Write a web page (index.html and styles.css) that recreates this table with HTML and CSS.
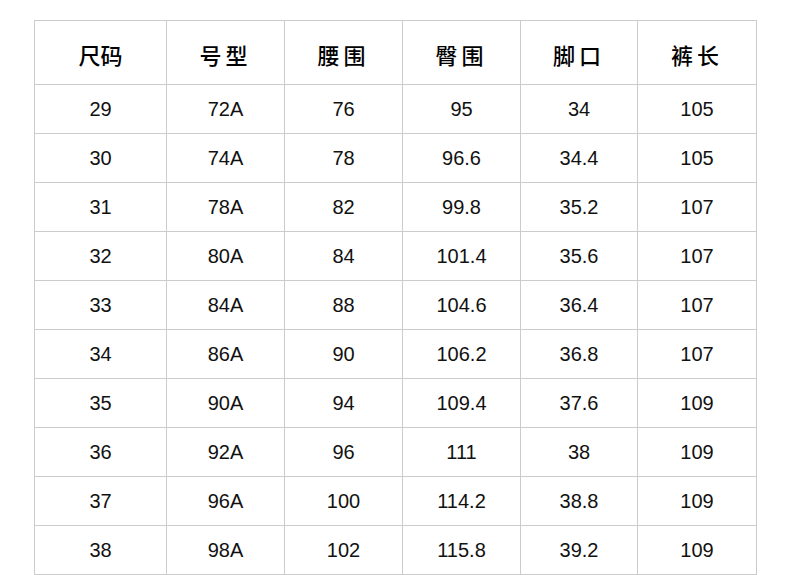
FILE: index.html
```html
<!DOCTYPE html>
<html lang="zh">
<head>
<meta charset="utf-8">
<title>尺码表</title>
<link rel="stylesheet" href="styles.css">
</head>
<body>
<table class="size-table">
  <colgroup>
    <col class="c1"><col class="c2"><col class="c3"><col class="c4"><col class="c5"><col class="c6">
  </colgroup>
  <thead>
    <tr class="head-row">
      <th class="first">尺码</th><th>号型</th><th>腰围</th><th>臀围</th><th>脚口</th><th>裤长</th>
    </tr>
  </thead>
  <tbody>
    <tr><td>29</td><td>72A</td><td>76</td><td>95</td><td>34</td><td>105</td></tr>
    <tr><td>30</td><td>74A</td><td>78</td><td>96.6</td><td>34.4</td><td>105</td></tr>
    <tr><td>31</td><td>78A</td><td>82</td><td>99.8</td><td>35.2</td><td>107</td></tr>
    <tr><td>32</td><td>80A</td><td>84</td><td>101.4</td><td>35.6</td><td>107</td></tr>
    <tr><td>33</td><td>84A</td><td>88</td><td>104.6</td><td>36.4</td><td>107</td></tr>
    <tr><td>34</td><td>86A</td><td>90</td><td>106.2</td><td>36.8</td><td>107</td></tr>
    <tr><td>35</td><td>90A</td><td>94</td><td>109.4</td><td>37.6</td><td>109</td></tr>
    <tr><td>36</td><td>92A</td><td>96</td><td>111</td><td>38</td><td>109</td></tr>
    <tr><td>37</td><td>96A</td><td>100</td><td>114.2</td><td>38.8</td><td>109</td></tr>
    <tr><td>38</td><td>98A</td><td>102</td><td>115.8</td><td>39.2</td><td>109</td></tr>
  </tbody>
</table>
</body>
</html>
```
FILE: styles.css
```css
html, body {
  margin: 0;
  padding: 0;
  background: #fff;
}
body {
  padding: 20px 0 0 34px;
  font-family: "Liberation Sans", "Noto Sans CJK SC", sans-serif;
  color: #000;
}
.size-table {
  border-collapse: collapse;
  table-layout: fixed;
  width: 722px;
}
.c1 { width: 132px; }
.c2 { width: 118px; }
.c3 { width: 118px; }
.c4 { width: 118px; }
.c5 { width: 117px; }
.c6 { width: 119px; }
.size-table th,
.size-table td {
  border: 1px solid #cccccc;
  text-align: center;
  vertical-align: middle;
  padding: 0;
}
.size-table th {
  height: 64px;
  font-family: "Noto Sans CJK SC", sans-serif;
  font-size: 22px;
  font-weight: 500;
  letter-spacing: 4px;
  padding-top: 2px;
  box-sizing: border-box;
}
.size-table th.first {
  letter-spacing: 0;
}
.size-table td {
  height: 49px;
  box-sizing: border-box;
  font-size: 20px;
  color: #111;
}
```
